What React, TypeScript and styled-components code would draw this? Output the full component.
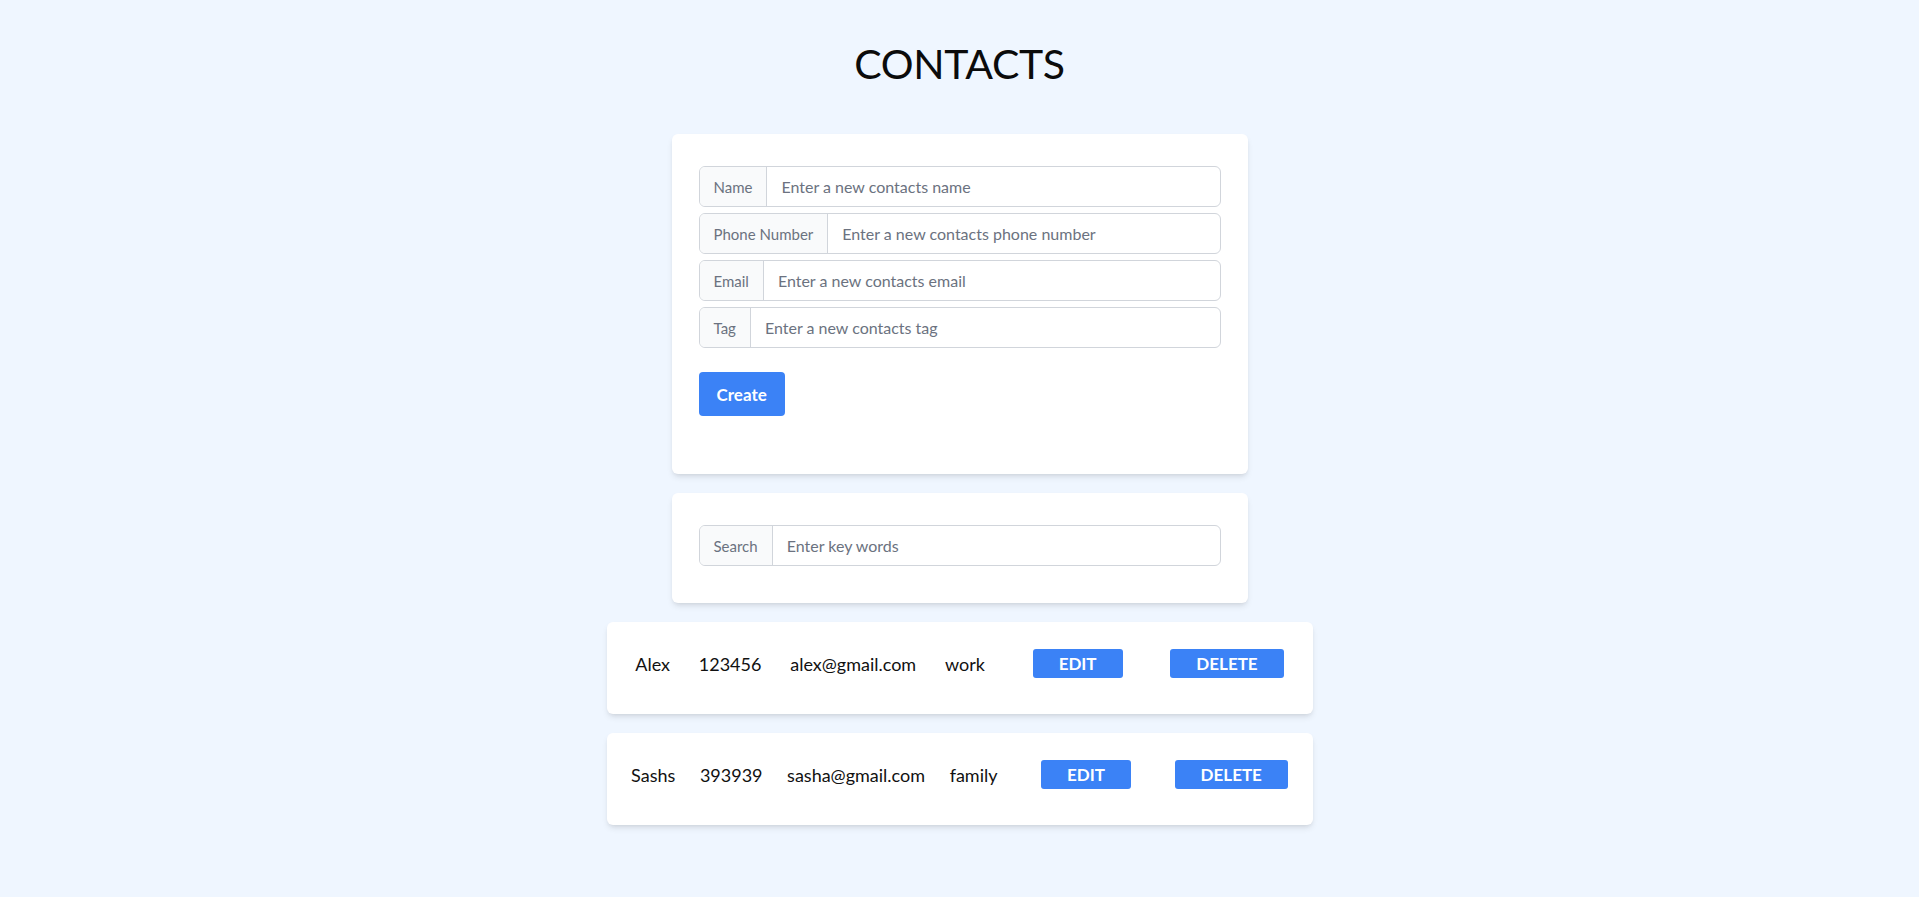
import React from "react";
import styled, { createGlobalStyle } from "styled-components";

const GlobalStyle = createGlobalStyle`
  html, body {
    margin: 0;
    padding: 0;
    background: #eff6ff;
  }
  body {
    font-family: Lato, "Noto Sans", "Liberation Sans", sans-serif;
    color: #111827;
  }
  * { box-sizing: border-box; }
`;

const Page = styled.div`
  min-height: 897px;
  display: flex;
  flex-direction: column;
  align-items: center;
  padding-top: 43px;
  padding-bottom: 40px;
`;

const Title = styled.h1`
  margin: 0 0 50px;
  font-family: Lato, "Liberation Sans", sans-serif;
  font-size: 41px;
  line-height: 41px;
  font-weight: 400;
  color: #0b0b0b;
  letter-spacing: -0.3px;
`;

const Card = styled.section<{ $bottom: number }>`
  width: 576px;
  background: #ffffff;
  border-radius: 6px;
  box-shadow: 0 4px 6px -1px rgba(0, 0, 0, 0.1), 0 2px 4px -2px rgba(0, 0, 0, 0.08);
  padding: 32px 27px ${(p) => p.$bottom}px 27px;
  & + & {
    margin-top: 19px;
  }
`;

const Group = styled.label`
  display: flex;
  height: 41px;
  border: 1px solid #d1d5db;
  border-radius: 6px;
  overflow: hidden;
  margin-bottom: 6px;
  background: #ffffff;
`;

const Addon = styled.span`
  display: flex;
  align-items: center;
  padding: 0 14px 0 14px;
  background: #f9fafb;
  border-right: 1px solid #d1d5db;
  color: #6b7280;
  font-size: 15px;
  white-space: nowrap;
`;

const Field = styled.input`
  flex: 1;
  min-width: 0;
  border: none;
  outline: none;
  padding: 0 14px;
  font-family: Lato, "Liberation Sans", sans-serif;
  font-size: 16px;
  color: #111827;
  background: transparent;
  &::placeholder {
    color: #6b7280;
    opacity: 1;
  }
`;

const PrimaryButton = styled.button`
  margin-top: 18px;
  margin-bottom: 27px;
  height: 44px;
  padding: 0 18px;
  border: none;
  border-radius: 4px;
  background: #3b82f6;
  color: #ffffff;
  font-family: Lato, "Liberation Sans", sans-serif;
  font-weight: 700;
  font-size: 17px;
  cursor: pointer;
`;

const Row = styled.div`
  width: 706px;
  margin-top: 19px;
  background: #ffffff;
  border-radius: 6px;
  box-shadow: 0 4px 6px -1px rgba(0, 0, 0, 0.1), 0 2px 4px -2px rgba(0, 0, 0, 0.08);
  padding: 27px 0 36px;
  display: flex;
  align-items: center;
  justify-content: space-evenly;
`;

const Cell = styled.span`
  font-size: 18px;
  color: #111111;
  white-space: nowrap;
`;

const SmallButton = styled.button<{ $spaced?: boolean }>`
  height: 29px;
  padding: 0 26px;
  margin: 0 ${(p) => (p.$spaced ? 19 : 0)}px;
  border: none;
  border-radius: 3px;
  background: #3b82f6;
  color: #ffffff;
  font-family: Lato, "Liberation Sans", sans-serif;
  font-weight: 700;
  font-size: 17px;
  cursor: pointer;
`;

type Contact = { name: string; phone: string; email: string; tag: string };

const contacts: Contact[] = [
  { name: "Alex", phone: "123456", email: "alex@gmail.com", tag: "work" },
  { name: "Sashs", phone: "393939", email: "sasha@gmail.com", tag: "family" },
];

const fields = [
  { label: "Name", placeholder: "Enter a new contacts name" },
  { label: "Phone Number", placeholder: "Enter a new contacts phone number" },
  { label: "Email", placeholder: "Enter a new contacts email" },
  { label: "Tag", placeholder: "Enter a new contacts tag" },
];

export default function App() {
  return (
    <>
      <GlobalStyle />
      <Page>
        <Title>CONTACTS</Title>
        <Card $bottom={31}>
          {fields.map((f) => (
            <Group key={f.label}>
              <Addon>{f.label}</Addon>
              <Field placeholder={f.placeholder} />
            </Group>
          ))}
          <PrimaryButton>Create</PrimaryButton>
        </Card>
        <Card $bottom={31}>
          <Group>
            <Addon>Search</Addon>
            <Field placeholder="Enter key words" />
          </Group>
        </Card>
        {contacts.map((c) => (
          <Row key={c.email}>
            <Cell>{c.name}</Cell>
            <Cell>{c.phone}</Cell>
            <Cell>{c.email}</Cell>
            <Cell>{c.tag}</Cell>
            <SmallButton $spaced>EDIT</SmallButton>
            <SmallButton>DELETE</SmallButton>
          </Row>
        ))}
      </Page>
    </>
  );
}
